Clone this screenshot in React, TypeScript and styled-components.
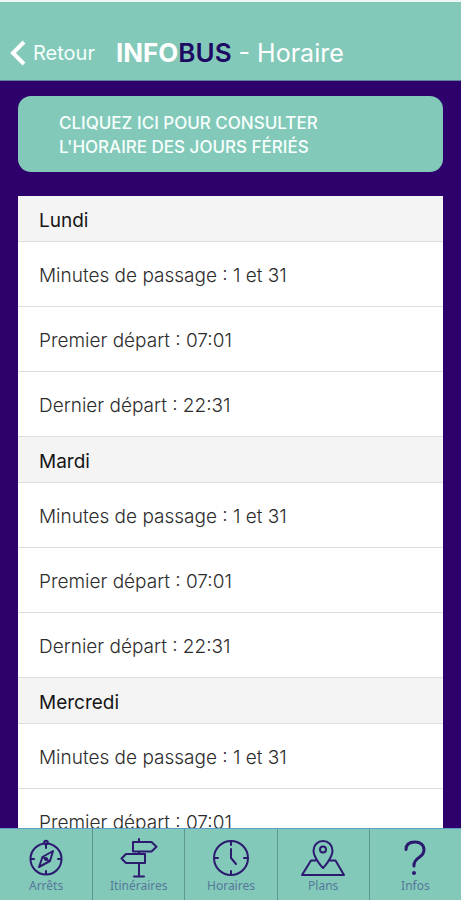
import React from "react";
import styled, { createGlobalStyle } from "styled-components";

const teal = "#83c9b9";
const purple = "#2e006c";
const ink = "#2b1a70";

const GlobalStyle = createGlobalStyle`
  *, *::before, *::after { box-sizing: border-box; }
  body {
    margin: 0;
    background: ${purple};
    font-family: Inter, "Liberation Sans", sans-serif;
  }
`;

const Screen = styled.div`
  display: flex;
  flex-direction: column;
  height: 100vh;
  background: ${purple};
`;

const Header = styled.header`
  display: flex;
  align-items: center;
  gap: 21px;
  padding: 24px 10px 0;
  height: 81px;
  flex-shrink: 0;
  background: ${teal};
  border-top: 2px solid #edf7f6;
  border-bottom: 1px solid #5d7f98;
  color: #fff;
`;

const BackButton = styled.button`
  display: flex;
  align-items: center;
  gap: 7px;
  padding: 0;
  border: 0;
  background: none;
  color: #f4fffc;
  font: 400 20px/28px Inter, "Liberation Sans", sans-serif;
  cursor: pointer;
`;

const Title = styled.h1`
  margin: 0;
  font-size: 25px;
  line-height: 32px;
  font-weight: 400;
  white-space: nowrap;
`;

const Brand = styled.span<{ $dark?: boolean }>`
  font-size: 26px;
  font-weight: ${(p) => (p.$dark ? 600 : 700)};
  color: ${(p) => (p.$dark ? "#1d0a62" : "#fff")};
`;

const Content = styled.main`
  flex: 1;
  min-height: 0;
  padding: 15px 18px 0;
  overflow-y: auto;
  scrollbar-width: none;
`;

const HolidayLink = styled.a`
  display: block;
  margin-bottom: 24px;
  padding: 15px 41px 13px;
  border-radius: 13px;
  background: ${teal};
  color: #f7fffd;
  font-size: 17px;
  line-height: 24px;
  font-weight: 500;
  text-decoration: none;
`;

const Schedule = styled.div`
  background: #fff;
`;

const DayTitle = styled.h2`
  margin: 0;
  padding: 4px 21px 0;
  background: #f4f4f4;
  border-bottom: 1px solid #dedede;
  color: #161616;
  font-size: 19px;
  line-height: 41px;
  font-weight: 400;
`;

const Rows = styled.ul`
  margin: 0;
  padding: 0;
  list-style: none;
`;

const Row = styled.li`
  padding: 4px 21px 0;
  border-bottom: 1px solid #dedede;
  color: #2c2c2c;
  font-size: 19px;
  line-height: 60px;
  font-weight: 300;
`;

const TabBar = styled.nav`
  display: grid;
  grid-template-columns: repeat(5, 1fr);
  height: 72px;
  flex-shrink: 0;
  background: ${teal};
  border-top: 1px solid #5d9fc4;
`;

const Tab = styled.button`
  display: flex;
  flex-direction: column;
  align-items: center;
  padding: 8px 0 0;
  border: 0;
  background: none;
  color: #56789a;
  font: 400 12px/14px "Noto Sans", "Open Sans", sans-serif;
  cursor: pointer;

  & + & { border-left: 1px solid #5b988f; }
`;

const TabIcon = styled.svg`
  width: 48px;
  height: 42px;
  fill: none;
  stroke: ${ink};
  stroke-width: 2;
  stroke-linejoin: round;
  stroke-linecap: round;
`;

const times = ["Minutes de passage : 1 et 31", "Premier départ : 07:01", "Dernier départ : 22:31"];

const days = [
  { name: "Lundi", times },
  { name: "Mardi", times },
  { name: "Mercredi", times: times.slice(0, 2) },
];

const tabs = [
  {
    label: "Arrêts",
    icon: (
      <>
        <circle cx="24" cy="22" r="15.5" />
        <circle cx="24" cy="5.5" r="1.8" />
        <path d="M24 8v3M24 34v3M9 22h3M36 22h3M31 14l-3 10-11 6 3.500-10zM20.500 20l7 4" />
        <circle cx="24" cy="22" r="1" />
      </>
    ),
  },
  {
    label: "Itinéraires",
    icon: (
      <path d="M24 2v3M18 5h18.500l5 4.700-5 4.700H18zM24 14.500v2.500M30 17v9H11l-4.500-4.500L11 17zM24 26v13.500M19 39.500h10" />
    ),
  },
  {
    label: "Horaires",
    icon: (
      <path d="M24 4a17 17 0 1 1 0 34a17 17 0 1 1 0-34M24 4v4M24 34v4M7 21h4M37 21h4M24 12v9l5 6" />
    ),
  },
  {
    label: "Plans",
    icon: (
      <>
        <path d="M24 31s-9.500-10-9.500-17.500a9.500 9.500 0 0 1 19 0C33.500 21 24 31 24 31z" />
        <circle cx="24" cy="12.500" r="3" />
        <path d="M17 23.500h-5L3 38h42l-8.500-14.500H31" />
      </>
    ),
  },
  {
    label: "Infos",
    icon: (
      <>
        <path strokeWidth="3" d="M15 12.500C15 7.500 18.500 5 24 5s9 3 9 8c0 8-10 7-10 15v1" />
        <circle cx="23" cy="36" r="1" fill={ink} />
      </>
    ),
  },
];

export default function App() {
  return (
    <>
      <GlobalStyle />
      <Screen>
        <Header>
          <BackButton type="button">
            <svg width="16" height="26" viewBox="0 0 16 26" fill="none" stroke="#fff" strokeWidth="4" aria-hidden="true">
              <path d="M14 2L3 13l11 11" />
            </svg>
            Retour
          </BackButton>
          <Title>
            <Brand>INFO</Brand>
            <Brand $dark>BUS</Brand> - Horaire
          </Title>
        </Header>
        <Content>
          <HolidayLink href="#feries">
            CLIQUEZ ICI POUR CONSULTER
            <br />
            L'HORAIRE DES JOURS FÉRIÉS
          </HolidayLink>
          <Schedule>
            {days.map((day) => (
              <section key={day.name}>
                <DayTitle>{day.name}</DayTitle>
                <Rows>
                  {day.times.map((time) => (
                    <Row key={time}>{time}</Row>
                  ))}
                </Rows>
              </section>
            ))}
          </Schedule>
        </Content>
        <TabBar>
          {tabs.map(({ label, icon }) => (
            <Tab key={label} type="button">
              <TabIcon viewBox="0 0 48 42" aria-hidden="true">{icon}</TabIcon>
              {label}
            </Tab>
          ))}
        </TabBar>
      </Screen>
    </>
  );
}
